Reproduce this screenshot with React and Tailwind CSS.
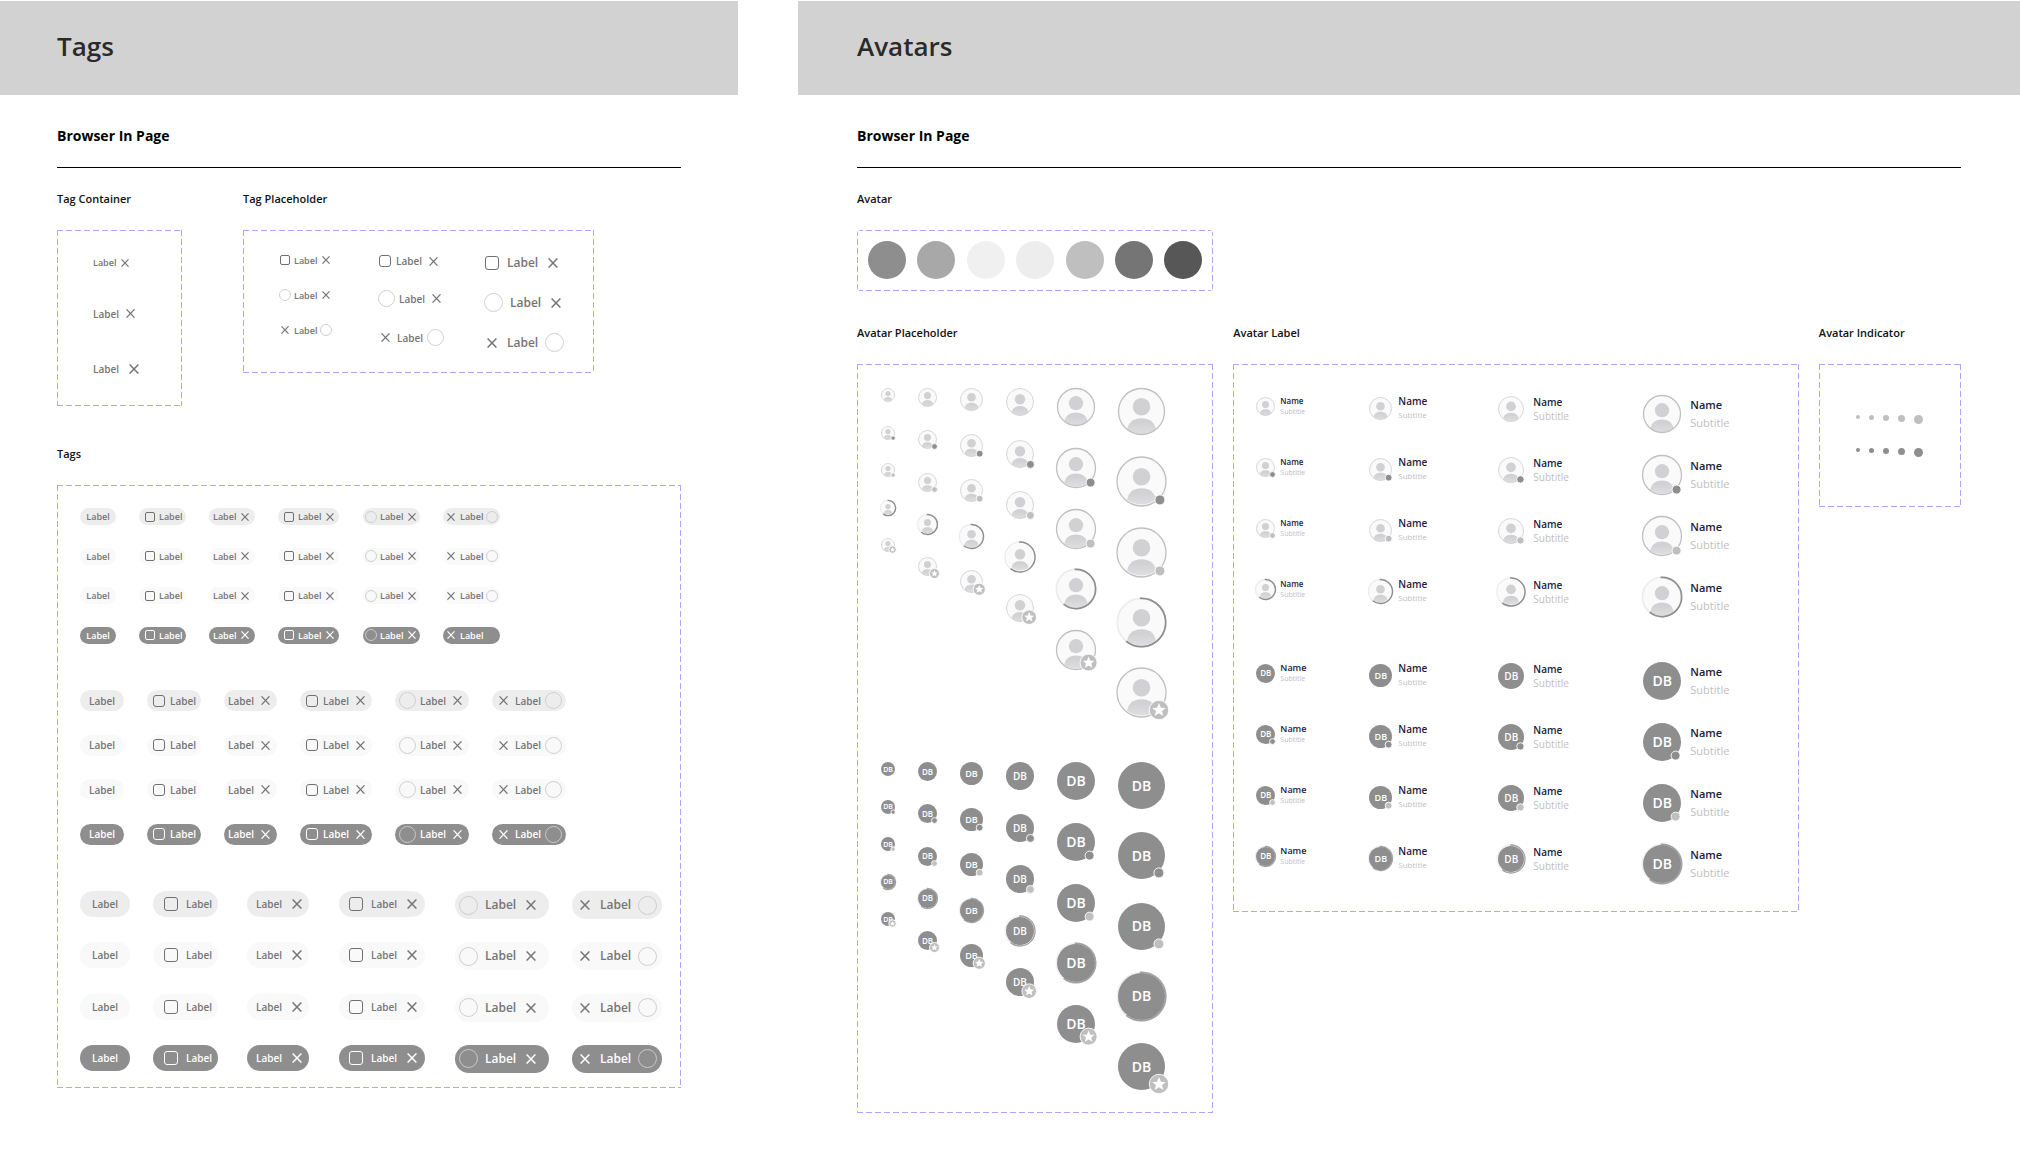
import React, { useId } from 'react'
import clsx from 'clsx'

const sizes = {
  sm: {
    text: 'text-[9px]',
    height: 'h-[17px]',
    check: 'size-[10px] mr-1 rounded-[2px]',
    circle: 'size-3',
    close: 'size-2',
    circleLead: 'mr-[3px]',
    circleTrail: 'ml-[3px]',
    closeLead: 'mr-[5px]',
    closeTrail: 'ml-[5px]',
  },
  md: {
    text: 'text-[10px]',
    height: 'h-[21px]',
    check: 'size-3 mr-[5px] rounded-[3px]',
    circle: 'size-[17px]',
    close: 'size-[9px]',
    circleLead: 'mr-1',
    circleTrail: 'ml-1',
    closeLead: 'mr-[7px]',
    closeTrail: 'ml-[7px]',
  },
  lg: {
    text: 'text-[10px]',
    height: 'h-[26px]',
    check: 'size-3.5 mr-2 rounded-[3px]',
    circle: 'size-[19px]',
    close: 'size-[10px]',
    circleLead: 'mr-[7px]',
    circleTrail: 'ml-[7px]',
    closeLead: 'mr-2.5',
    closeTrail: 'ml-2.5',
  },
}

const tones = {
  none: { chip: 'text-[#757575]', check: 'border-[#707070]', circle: 'border-[#d0d0d0]' },
  gray: { chip: 'bg-[#ededed] text-[#757575]', check: 'border-[#707070]', circle: 'border-[#cfcfcf]' },
  light: { chip: 'bg-[#f9f9f9] text-[#757575]', check: 'border-[#707070]', circle: 'border-[#cfcfcf]' },
  dark: { chip: 'bg-[#8e8e8e] text-white', check: 'border-white', circle: 'border-[#c9c9c9]' },
}

// one row of a group, left to right
const groups = [
  {
    size: 'sm',
    grid: 'h-[136px] grid-cols-[59px_70px_69px_85px_80px_57px]',
    chips: [
      { width: 'w-9', pad: 'justify-center' },
      { lead: 'check', width: 'w-[47px]', pad: 'pl-1.5' },
      { trail: 'close', width: 'w-[46px]', pad: 'pl-1' },
      { lead: 'check', trail: 'close', width: 'w-[61px]', pad: 'pl-1.5' },
      { lead: 'circle', trail: 'close', width: 'w-[57px]', pad: 'pl-0.5' },
      { lead: 'close', trail: 'circle', width: 'w-[57px]', pad: 'pl-1' },
    ],
  },
  {
    size: 'md',
    grid: 'h-[155px] grid-cols-[67px_77px_76px_95px_97px_74px]',
    chips: [
      { width: 'w-11', pad: 'justify-center' },
      { lead: 'check', width: 'w-[54px]', pad: 'pl-1.5' },
      { trail: 'close', width: 'w-[53px]', pad: 'pl-1' },
      { lead: 'check', trail: 'close', width: 'w-[72px]', pad: 'pl-1.5' },
      { lead: 'circle', trail: 'close', width: 'w-[74px]', pad: 'pl-1' },
      { lead: 'close', trail: 'circle', width: 'w-[74px]', pad: 'pl-[7px]' },
    ],
  },
  {
    size: 'lg',
    grid: 'h-[182px] grid-cols-[73px_94px_92px_116px_117px_90px]',
    chips: [
      { width: 'w-[50px]', pad: 'justify-center' },
      { lead: 'check', width: 'w-[65px]', pad: 'pl-[11px]' },
      { trail: 'close', width: 'w-[62px]', pad: 'pl-[9px]' },
      { lead: 'check', trail: 'close', width: 'w-[86px]', pad: 'pl-2.5' },
      { lead: 'circle', trail: 'close', width: 'w-[94px]', pad: 'pl-1', big: true },
      { lead: 'close', trail: 'circle', width: 'w-[90px]', pad: 'pl-2', big: true },
    ],
  },
]

const Cross = ({ className }) => (
  <svg viewBox="0 0 10 10" className={className} fill="none" stroke="currentColor" strokeWidth="1.4">
    <path d="M0.6 0.4 9.4 9.6M9.4 0.4 0.6 9.6" />
  </svg>
)

const Tag = ({ size, tone = 'none', lead, trail, pad, width = 'w-fit', height, big, text }) => {
  const id = useId()
  const s = sizes[size]
  const t = tones[tone]
  const hideCircle = size === 'sm' && tone === 'dark' && trail === 'circle'

  const part = (kind, side) => {
    if (kind === 'check') {
      return (
        <input
          id={id}
          type="checkbox"
          className={clsx('shrink-0 appearance-none border bg-transparent', s.check, t.check)}
        />
      )
    }
    if (kind === 'circle') {
      return (
        <span
          className={clsx(
            'shrink-0 rounded-full border',
            s.circle,
            hideCircle ? 'border-transparent' : t.circle,
            side === 'lead' ? s.circleLead : s.circleTrail
          )}
        />
      )
    }
    if (kind === 'close') {
      return (
        <button
          type="button"
          aria-label="Remove"
          className={clsx('shrink-0', side === 'lead' ? s.closeLead : s.closeTrail)}
        >
          <Cross className={s.close} />
        </button>
      )
    }
    return null
  }

  return (
    <div
      className={clsx(
        'flex items-center rounded-full leading-none font-semibold',
        t.chip,
        pad,
        width,
        height || (big ? 'h-7' : s.height),
        text || (big ? 'text-[12px]' : s.text)
      )}
    >
      {part(lead, 'lead')}
      {lead === 'check' ? <label htmlFor={id}>Label</label> : <span>Label</span>}
      {part(trail, 'trail')}
    </div>
  )
}

const STAR = 'M0 -6.8 1.9 -2.2 6.7 -2 3 1.1 4.3 5.8 0 3.2 -4.3 5.8 -3 1.1 -6.7 -2 -1.9 -2.2Z'

// d: face, ring: face with a status, arc: progress ring radius, dot/star: badge diameter and its offset
const avatarSizes = {
  14: { d: 14, ring: 14, arc: 7.6, dot: 3.6, off: 5.1, star: 7, starOff: 4.5, text: 'text-[7px]', box: 'size-3.5' },
  19: { d: 19, ring: 19, arc: 10, dot: 5, off: 7, star: 9.4, starOff: 7, text: 'text-[8px]', box: 'size-[19px]' },
  23: { d: 22.6, ring: 22.6, arc: 11.8, dot: 6, off: 8, star: 11.4, starOff: 7.6, text: 'text-[9px]', box: 'size-[23px]' },
  26: { d: 26, ring: 26, arc: 14, dot: 6.6, off: 9.4, star: 13, starOff: 8.4, text: 'text-[10px]', box: 'size-[26px]' },
  28: { d: 28, ring: 28, arc: 15, dot: 7.2, off: 10.4, star: 14, starOff: 9.2, text: 'text-[10px]', box: 'size-7' },
  38: { d: 38, ring: 40, arc: 19.6, dot: 8.2, off: 14.6, star: 16.4, starOff: 12.6, text: 'text-[14px]', box: 'size-[38px]' },
  47: { d: 47, ring: 50, arc: 24.2, dot: 9.2, off: 18.4, star: 18.8, starOff: 17.5, text: 'text-[14px]', box: 'size-[47px]' },
}

const Progress = ({ r, color, width, track }) => (
  <>
    <circle r={r} fill="none" stroke={track} strokeWidth={width} />
    <circle
      r={r}
      fill="none"
      stroke={color}
      strokeWidth={width}
      pathLength="100"
      strokeDasharray="62 100"
      transform="rotate(-94)"
    />
  </>
)

const Avatar = ({ size, state, initials }) => {
  const id = useId()
  const s = avatarSizes[size]
  const progress = state === 'progress'
  const ring = !state ? s.d : s.ring
  const big = s.d > 30
  const r = s.d / 2
  const view = `${-r} ${-r} ${s.d} ${s.d}`
  const badge = state === 'busy' || state === 'away'
  const off = initials && big ? s.off - 1 : s.off

  return (
    <div className={clsx('grid shrink-0 place-items-center *:[grid-area:1/1]', s.box)}>
      <svg viewBox={view} className={clsx('overflow-visible', s.box)}>
        {initials ? (
          <>
            {progress && <Progress r={s.arc} color="#a3a3a3" track="#f0f0f0" width={big ? 1.8 : 1.3} />}
            <circle r={r} fill="#8e8e8e" />
          </>
        ) : (
          <>
            <defs>
              <clipPath id={`${id}c`}>
                <circle r={r - 0.4} />
              </clipPath>
              <linearGradient id={`${id}g`} x1="0" y1="0" x2="0" y2="1">
                <stop offset="0.2" stopColor="#d1d1d4" />
                <stop offset="0.9" stopColor="#dfdfe1" />
              </linearGradient>
            </defs>
            <circle r={ring / 2 - 0.5} fill="#fafafa" />
            <circle cy={-r * 0.2} r={r * 0.375} fill="#d1d1d4" />
            <g clipPath={`url(#${id}c)`}>
              <path
                transform={`scale(${r / 24})`}
                d="M-15 22C-15 12 -9 7 0 7S15 12 15 22V26H-15Z"
                fill={`url(#${id}g)`}
              />
            </g>
            {progress ? (
              <Progress r={s.arc} color="#8e8e8e" track="#ececec" width={big ? 1.7 : 1.4} />
            ) : (
              <circle
                r={ring / 2 - 0.5}
                fill="none"
                stroke={big ? '#c0c0c0' : '#d2d2d2'}
                strokeWidth={big ? 1.3 : 0.9}
              />
            )}
          </>
        )}
      </svg>
      {initials && (
        <span className={clsx('leading-none font-semibold text-white', s.text)}>DB</span>
      )}
      {(badge || state === 'star') && (
        <svg viewBox={view} className={clsx('z-10 overflow-visible', s.box)}>
          {badge ? (
            <circle
              cx={off}
              cy={off}
              r={s.dot / 2 + 0.4}
              fill={state === 'busy' ? '#8e8e8e' : '#bfbfbf'}
              stroke="white"
              strokeWidth="0.9"
            />
          ) : (
            <g transform={`translate(${s.starOff} ${s.starOff})`}>
              <circle r={s.star / 2 + 0.3} fill="#bfbfbf" stroke="white" strokeWidth="0.9" />
              <path d={STAR} transform={`scale(${s.star / 18.5})`} fill="white" />
            </g>
          )}
        </svg>
      )}
    </div>
  )
}

const columns = [
  { size: 14, height: 'h-[164px]' },
  { size: 19, height: 'h-[188px]' },
  { size: 23, height: 'h-[205px]' },
  { size: 28, height: 'h-[234px]' },
  { size: 38, height: 'h-[281px]' },
  { size: 47, height: 'h-[328px]' },
]
const states = [null, 'busy', 'away', 'progress', 'star']

const AvatarColumns = ({ initials }) => (
  <div className="flex items-start gap-[23px]">
    {columns.map((col) => (
      <div key={col.size} className={clsx('flex flex-col justify-between', col.height)}>
        {states.map((state, i) => (
          <Avatar key={i} size={col.size} state={state} initials={initials} />
        ))}
      </div>
    ))}
  </div>
)

const labelSizes = [
  { size: 19, gap: 'gap-[5px]', name: 'text-[8px] leading-[11px]', sub: 'text-[7px] leading-[11px]' },
  { size: 23, gap: 'gap-1.5', name: 'text-[10px] leading-[13px]', sub: 'text-[8px] leading-[13px]' },
  { size: 26, gap: 'gap-[9px]', name: 'text-[10px] leading-[14px]', sub: 'text-[10px] leading-[14px]' },
  { size: 38, gap: 'gap-[9px]', name: 'text-[11px] leading-[18px]', sub: 'text-[11px] leading-[18px]' },
]

const AvatarLabels = ({ initials }) => (
  <div className="flex flex-col gap-[23px]">
    {states.slice(0, 4).map((state, i) => (
      <div key={i} className="grid h-[38px] grid-cols-[113px_129px_145px_1fr] items-start">
        {labelSizes.map((l) => (
          <div key={l.size} className={clsx('flex items-center', l.gap)}>
            <Avatar size={l.size} state={state} initials={initials} />
            <div>
              <p
                className={clsx(
                  'font-semibold text-[#1c1c3a]',
                  initials && l.size === 19 ? 'text-[9px] leading-[11px]' : l.name
                )}
              >
                Name
              </p>
              <p className={clsx('text-[#c0c0c0]', l.sub)}>Subtitle</p>
            </div>
          </div>
        ))}
      </div>
    ))}
  </div>
)

const dots = ['size-1', 'size-[5px]', 'size-1.5', 'size-[7px]', 'size-[9px]']

const Dots = ({ color }) => (
  <div className="flex h-[9px] items-start gap-[9px]">
    {dots.map((dot) => (
      <span key={dot} className={clsx('rounded-full', dot, color)} />
    ))}
  </div>
)

const swatches = [
  'bg-[#8e8e8e]',
  'bg-[#a8a8a8]',
  'bg-[#f0f0f0]',
  'bg-[#ededed]',
  'bg-[#bfbfbf]',
  'bg-[#757575]',
  'bg-[#575757]',
]

const Section = ({ title, className, children }) => (
  <section>
    <h3 className="mb-[23px] text-[11px] leading-4 font-semibold text-[#111]">{title}</h3>
    <div
      className={clsx(
        'bg-[repeating-linear-gradient(90deg,#b3a3ff_0_6px,transparent_6px_9px),repeating-linear-gradient(90deg,#b3a3ff_0_6px,transparent_6px_9px),repeating-linear-gradient(180deg,#b3a3ff_0_6px,transparent_6px_9px),repeating-linear-gradient(180deg,#b3a3ff_0_6px,transparent_6px_9px)] bg-no-repeat [background-position:top,bottom,left,right] [background-size:100%_1px,100%_1px,1px_100%,1px_100%]',
        className
      )}
    >
      {children}
    </div>
  </section>
)

const PageHeader = ({ title, pad }) => (
  <header className={clsx('h-[94px] bg-[#d2d2d2] pt-[25px]', pad)}>
    <h1 className="text-[26px] leading-10 font-semibold text-[#2a2a2a]">{title}</h1>
  </header>
)

const PageTitle = () => (
  <h2 className="mb-[23px] border-b border-black pt-[31px] pb-[21px] text-[14px] leading-5 font-bold text-black">
    Browser In Page
  </h2>
)

const App = () => {
  return (
    <div className="flex min-h-screen items-start gap-[60px] bg-white pt-px font-['Open_Sans',sans-serif]">
      <main className="min-w-0 flex-[738]">
        <PageHeader title="Tags" pad="px-[57px]" />
        <div className="px-[57px]">
          <PageTitle />
          <div className="flex items-start gap-[61px]">
            <Section title="Tag Container" className="flex h-44 w-[125px] flex-col gap-8 pt-6 pl-9">
              <Tag size="sm" trail="close" />
              <Tag size="md" trail="close" />
              <Tag size="lg" trail="close" />
            </Section>
            <Section title="Tag Placeholder" className="flex h-[143px] w-[351px] items-start pt-6 pl-9">
              <div className="flex w-[99px] flex-col gap-[23px]">
                <Tag size="sm" lead="check" trail="close" height="h-3" pad="pl-px" />
                <Tag size="sm" lead="circle" trail="close" height="h-3" />
                <Tag size="sm" lead="close" trail="circle" height="h-3" pad="pl-0.5" />
              </div>
              <div className="flex w-[106px] flex-col gap-[22px]">
                <Tag size="md" lead="check" trail="close" height="h-3.5" pad="pl-px" />
                <Tag size="md" lead="circle" trail="close" height="h-[17px]" />
                <Tag size="md" lead="close" trail="circle" height="h-[17px]" pad="pl-[3px]" />
              </div>
              <div className="flex flex-col gap-[21px]">
                <Tag size="lg" lead="check" trail="close" height="h-[18px]" pad="pl-px" text="text-[12px]" />
                <Tag size="lg" lead="circle" trail="close" height="h-[19px]" text="text-[12px]" />
                <Tag size="lg" lead="close" trail="circle" height="h-[19px]" pad="pl-[3px]" text="text-[12px]" />
              </div>
            </Section>
          </div>
          <div className="mt-10">
            <Section title="Tags" className="flex flex-col gap-[46px] pt-[23px] pb-[15px] pl-[23px]">
              {groups.map((group) => (
                <div key={group.size} className={clsx('grid content-between', group.grid)}>
                  {['gray', 'light', 'light', 'dark'].map((tone, row) =>
                    group.chips.map((chip, i) => (
                      <Tag key={`${row}-${i}`} size={group.size} tone={tone} {...chip} />
                    ))
                  )}
                </div>
              ))}
            </Section>
          </div>
        </div>
      </main>

      <main className="min-w-0 flex-[1222]">
        <PageHeader title="Avatars" pad="px-[59px]" />
        <div className="px-[59px]">
          <PageTitle />
          <div className="grid grid-cols-[356fr_565fr_142fr] items-start gap-x-5 gap-y-[34px]">
            <div className="col-span-3 grid grid-cols-subgrid">
              <Section title="Avatar" className="flex justify-between rounded-sm px-[11px] pt-[11px] pb-3">
                {swatches.map((color) => (
                  <span key={color} className={clsx('size-[38px] rounded-full', color)} />
                ))}
              </Section>
            </div>
            <Section title="Avatar Placeholder" className="flex flex-col gap-[46px] pt-6 pb-[23px] pl-6">
              <AvatarColumns />
              <AvatarColumns initials />
            </Section>
            <Section title="Avatar Label" className="flex flex-col gap-[46px] pt-[31px] pb-[29px] pl-[23px]">
              <AvatarLabels />
              <AvatarLabels initials />
            </Section>
            <Section title="Avatar Indicator" className="flex h-[143px] flex-col gap-6 pt-[51px] pl-[37px]">
              <Dots color="bg-[#bfbfbf]" />
              <Dots color="bg-[#8e8e8e]" />
            </Section>
          </div>
        </div>
      </main>
    </div>
  )
}

export default App
